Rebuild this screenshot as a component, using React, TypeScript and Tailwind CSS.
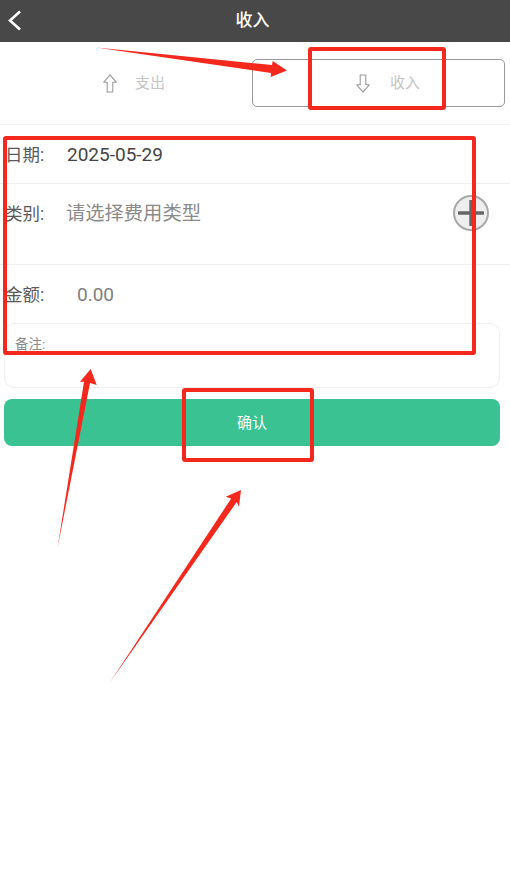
const font = { cjk: "font-['Roboto','Noto_Sans_CJK_SC',sans-serif]" };

const UpArrow = () => (
  <svg width="14" height="19" viewBox="0 0 14 19" fill="none">
    <path d="M7 .8 13.2 8.2H9.8V18H4.2V8.2H.8Z" stroke="#9a9a9a" strokeWidth="1.1" strokeLinejoin="round" />
  </svg>
);

const App = () => {
  return (
    <div className={`relative min-h-[894px] w-[510px] overflow-hidden bg-white ${font.cjk}`}>
      {/* top bar */}
      <header className="relative flex h-[42px] items-center justify-center bg-[#484848] pr-[5px]">
        <svg className="absolute left-[7px] top-[10px]" width="15" height="21" viewBox="0 0 15 21" fill="none">
          <path d="M13 1.5 3 10.5l10 9" stroke="#fff" strokeWidth="2.6" />
        </svg>
        <span className="text-[17px] font-medium text-white">收入</span>
      </header>

      {/* tabs */}
      <div className="flex h-[83px] items-center border-b border-[#eeeeee] pb-[1px] pl-[4px] pr-[5px]">
        <div className="flex h-[48px] w-[248px] items-center pl-[99px] pt-[2px] text-[15px] text-[#c4c4c4]">
          <UpArrow />
          <span className="ml-[18px]">支出</span>
        </div>
        <div className="flex h-[48px] flex-1 items-center rounded-[5px] border-[1.5px] border-[#999999] pl-[103px] pt-[2px] text-[15px] text-[#c4c4c4]">
          <div className="rotate-180">
            <UpArrow />
          </div>
          <span className="ml-[20px]">收入</span>
        </div>
      </div>

      {/* form rows */}
      <div className="flex h-[59px] items-start border-b border-[#eeeeee] pl-[5px] pt-[18px] text-[19px] leading-[24px]">
        <span className="w-[62px] text-[17.5px] text-[#5a5a5a]">日期:</span>
        <span className="text-[#444444]">2025-05-29</span>
      </div>
      <div className="relative flex h-[81px] items-start border-b border-[#eeeeee] pl-[5px] pt-[18px] text-[19.3px] leading-[24px]">
        <span className="w-[62px] text-[17.5px] text-[#5a5a5a]">类别:</span>
        <span className="-ml-[1px] text-[#8a8a8a]">请选择费用类型</span>
        <div className="absolute left-[453px] top-[11px] flex h-[36px] w-[36px] items-center justify-center rounded-full border-2 border-[#a8a8a8] bg-[#eeeeee]">
          <svg width="26" height="26" viewBox="0 0 26 26">
            <path d="M1 13h24M13 1v24" stroke="#666666" strokeWidth="3.4" strokeLinecap="round" />
          </svg>
        </div>
      </div>
      <div className="flex h-[58px] items-start pl-[5px] pt-[18px] text-[19px] leading-[24px]">
        <span className="w-[72px] text-[17.5px] text-[#5a5a5a]">金额:</span>
        <span className="text-[#808080]">0.00</span>
      </div>

      {/* remark + submit */}
      <div className="px-[4px] pr-[10px]">
        <div className="h-[65px] rounded-[10px] border border-[#eeeeee] pl-[10px] pt-[11px] text-[13.5px] leading-[18px] text-[#8a8a8a]">
          备注:
        </div>
        <button className="mt-[11px] flex h-[47px] w-full items-center justify-center rounded-[8px] bg-[#3ac293] pt-[1px] text-[15px] text-white">
          确认
        </button>
      </div>

      {/* red annotations drawn over the screenshot */}
      <div className="absolute left-[308px] top-[47px] h-[63px] w-[138px] rounded-[3px] border-[4px] border-[#f5281e]" />
      <div className="absolute left-[3px] top-[136px] h-[219px] w-[473px] rounded-[3px] border-[4px] border-[#f5281e]" />
      <div className="absolute left-[182px] top-[388px] h-[74px] w-[132px] rounded-[3px] border-[4px] border-[#f5281e]" />
      <svg className="pointer-events-none absolute left-0 top-0" width="510" height="894" viewBox="0 0 510 894">
        <path d="M96 47.5 272 65 272.7 61 287 70.6 270.7 77 271 73Z" fill="#f5281e" />
        <path d="M57.5 548 84 381.7 80 381.7 90.7 369 96.7 385 90 383Z" fill="#f5281e" />
        <path d="M109.5 683 231.2 498.5 225.7 496.7 241 490 239 506.7 236.7 502Z" fill="#f5281e" />
      </svg>
    </div>
  );
};

export default App;
